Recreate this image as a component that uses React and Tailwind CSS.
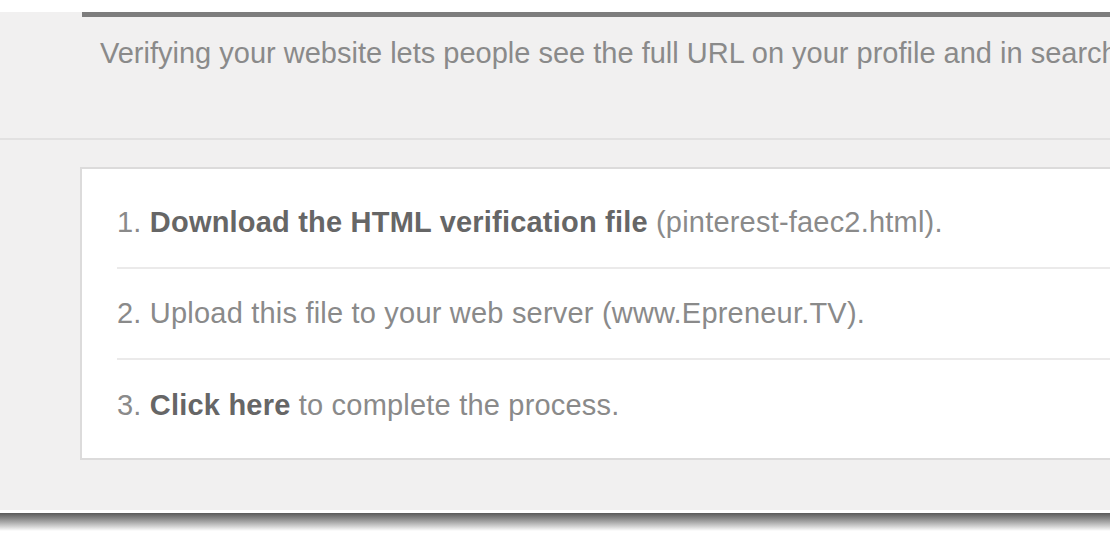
import React from 'react';

const steps = [
  { n: '1.', bold: 'Download the HTML verification file', rest: ' (pinterest-faec2.html).' },
  { n: '2.', bold: '', rest: 'Upload this file to your web server (www.Epreneur.TV).' },
  { n: '3.', bold: 'Click here', rest: ' to complete the process.' },
];

const App = () => {
  return (
    <div
      className="w-[1110px] h-[550px] overflow-hidden bg-white"
      style={{ fontFamily: '"Liberation Sans", Arial, sans-serif' }}
    >
      <div className="h-[12px] bg-white" />

      {/* gray panel */}
      <div className="bg-[#f1f0f0] h-[498px] flex flex-col">
        <div className="pl-[82px]">
          <div className="h-[5px] bg-[#7d7d7d]" />
        </div>
        <div className="h-[123px] border-b-2 border-[#e2e1e1] pl-[100px] pt-[19px]">
          <p className="text-[29px] leading-[34px] text-[#8a8a8a] whitespace-nowrap">
            Verifying your website lets people see the full URL on your profile and in search results.
          </p>
        </div>

        <div className="pl-[80px] pt-[27px]">
          <div className="w-[1100px] bg-white border-2 border-[#dcdbdb] pt-[9px] pb-[7px] pl-[35px]">
            {steps.map((s, i) => (
              <div
                key={i}
                className={
                  'h-[91px] flex items-center whitespace-nowrap text-[29px] tracking-[0.2px] text-[#8a8a8a] ' +
                  (i < steps.length - 1 ? 'border-b-2 border-[#ebeaea]' : '')
                }
              >
                <span className="pt-[1px]">
                  {s.n}{' '}
                  {s.bold && <b className="font-bold text-[#666666]">{s.bold}</b>}
                  {s.rest}
                </span>
              </div>
            ))}
          </div>
        </div>
      </div>

      {/* page edge */}
      <div className="h-[3px] bg-white" />
      <div className="h-[18px] bg-gradient-to-b from-[#5a5a5a] via-[#a8a8a8] to-white" />
    </div>
  );
};

export default App;
